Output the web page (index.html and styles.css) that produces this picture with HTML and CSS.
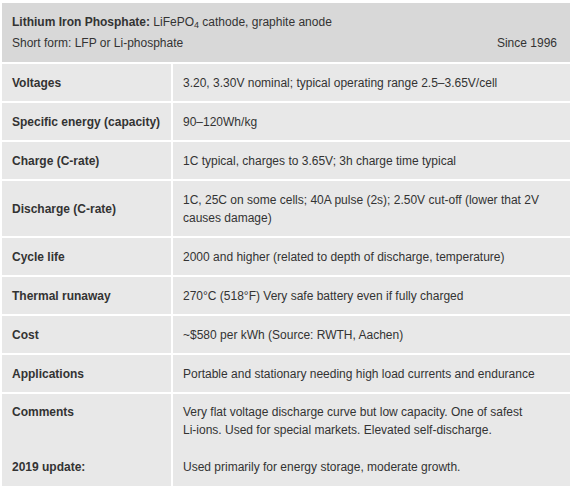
FILE: index.html
```html
<!DOCTYPE html>
<html lang="en">
<head>
    <meta charset="UTF-8">
    <meta name="viewport" content="width=device-width, initial-scale=1.0">
    <title>Lithium Iron Phosphate</title>
    <link rel="stylesheet" href="styles.css">
</head>
<body>
    <table class="spec-table">
        <tr class="head">
            <td colspan="2">
                <p><strong>Lithium Iron Phosphate:</strong> LiFePO<sub>4</sub> cathode, graphite anode</p>
                <p class="head-line">
                    <span>Short form: LFP or Li-phosphate</span>
                    <span>Since 1996</span>
                </p>
            </td>
        </tr>
        <tr>
            <th>Voltages</th>
            <td>3.20, 3.30V nominal; typical operating range 2.5–3.65V/cell</td>
        </tr>
        <tr>
            <th>Specific energy (capacity)</th>
            <td>90–120Wh/kg</td>
        </tr>
        <tr>
            <th>Charge (C-rate)</th>
            <td>1C typical, charges to 3.65V; 3h charge time typical</td>
        </tr>
        <tr>
            <th>Discharge (C-rate)</th>
            <td>1C, 25C on some cells; 40A pulse (2s); 2.50V cut-off (lower that 2V causes damage)</td>
        </tr>
        <tr>
            <th>Cycle life</th>
            <td>2000 and higher (related to depth of discharge, temperature)</td>
        </tr>
        <tr>
            <th>Thermal runaway</th>
            <td>270°C (518°F) Very safe battery even if fully charged</td>
        </tr>
        <tr>
            <th>Cost</th>
            <td>~$580 per kWh (Source: RWTH, Aachen)</td>
        </tr>
        <tr>
            <th>Applications</th>
            <td>Portable and stationary needing high load currents and endurance</td>
        </tr>
        <tr class="top">
            <th>Comments</th>
            <td>Very flat voltage discharge curve but low capacity. One of safest <span class="nowrap">Li-ions.</span> Used for special markets. Elevated self-discharge.</td>
        </tr>
        <tr class="top update">
            <th>2019 update:</th>
            <td>Used primarily for energy storage, moderate growth.</td>
        </tr>
    </table>
</body>
</html>
```

FILE: styles.css
```css
body {
    margin: 0;
    padding: 3px 3px 0 2px;
    font-family: "Liberation Sans", Arial, sans-serif;
    font-size: 12px;
    color: #333;
    background: #fff;
}
.spec-table {
    width: 568px;
    border-collapse: collapse;
    background: #e8e8e8;
}
.spec-table th,
.spec-table td {
    padding: 10px 10px 9px;
    line-height: 18px;
    text-align: left;
    vertical-align: middle;
    border-top: 2px solid #fff;
}
.spec-table th {
    width: 149px;
    font-weight: bold;
    border-right: 2px solid #fff;
}
.spec-table tr.top th,
.spec-table tr.top td {
    vertical-align: top;
    padding-top: 9px;
}
.spec-table tr.update th,
.spec-table tr.update td {
    border-top: none;
    padding-top: 10px;
    padding-bottom: 10px;
}
.spec-table .head td {
    background: #d8d8d8;
    border-top: none;
    padding: 9px 13px 8px 10px;
    line-height: 21px;
}
.head p {
    margin: 0;
}
.head sub {
    font-size: 9px;
    vertical-align: -2px;
    line-height: 0;
}
.head-line {
    display: flex;
    justify-content: space-between;
}
.nowrap {
    white-space: nowrap;
}
```
